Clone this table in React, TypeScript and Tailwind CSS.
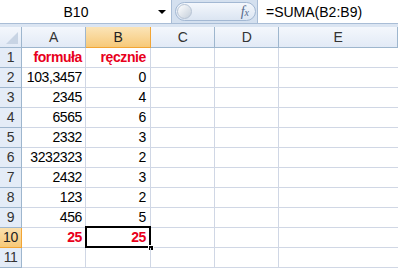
import React from "react";

const font = { fontFamily: '"Liberation Sans", Arial, sans-serif' };

const cols = ["A", "B", "C", "D", "E"];
const rows: [string, string, boolean][] = [
  ["formuła", "ręcznie", true],
  ["103,3457", "0", false],
  ["2345", "4", false],
  ["6565", "6", false],
  ["2332", "3", false],
  ["3232323", "2", false],
  ["2432", "3", false],
  ["123", "2", false],
  ["456", "5", false],
  ["25", "25", true],
  ["", "", false],
];

export default function App() {
  return (
    <div className="w-[398px] h-[268px] overflow-hidden bg-[#dbe5f2] flex flex-col" style={font}>
      {/* formula bar */}
      <div className="h-[24px] flex items-stretch bg-[#d4e0ef] border-b border-[#a9bdd6] shrink-0">
        <div className="w-[172px] bg-white border-r border-[#a9bdd6] flex items-center">
          <div className="w-[152px] text-center text-[14px] text-black leading-none">B10</div>
          <div className="flex-1 flex justify-center">
            <div className="w-0 h-0 border-l-[4px] border-r-[4px] border-t-[4px] border-l-transparent border-r-transparent border-t-black" />
          </div>
        </div>
        <div className="flex items-center pl-[3px] pr-[1px]">
          <div className="relative w-[81px] h-[19px] rounded-full border border-[#a3b8d3] bg-gradient-to-b from-[#f4f7fc] to-[#dbe5f2] flex items-center justify-end pr-[6px]">
            <div className="absolute left-[1px] top-[1px] w-[15px] h-[15px] rounded-full bg-gradient-to-br from-[#ffffff] to-[#c5cfdb] border border-[#b6c3d4]" />
            <span className="text-[14px] italic text-[#55698a] leading-none" style={{ fontFamily: '"Liberation Serif", serif' }}>
              f<span className="text-[10px]">x</span>
            </span>
          </div>
        </div>
        <div className="flex-1 bg-white border-l border-[#a9bdd6] flex items-center pl-[8px] text-[14px] text-black leading-none">
          =SUMA(B2:B9)
        </div>
      </div>
      <div className="h-[3px] shrink-0" />
      {/* sheet */}
      <div className="grid grid-cols-[22px_64px_65px_64px_64px_1fr] bg-white text-[14px] tracking-[-0.4px] flex-1">
        {/* header row */}
        <div className="h-[21px] bg-gradient-to-b from-[#f4f7fc] to-[#e2eaf6] border-r border-b border-[#9eb6ce] relative">
          <div className="absolute right-[3px] bottom-[3px] w-0 h-0" style={{ borderBottom: "12px solid #c8d4e4", borderLeft: "12px solid transparent" }} />
        </div>
        {cols.map((c) => (
          <div
            key={c}
            className={
              "h-[21px] flex items-center justify-center border-r border-b text-[14px] " +
              (c === "B"
                ? "bg-gradient-to-b from-[#fbe4b7] to-[#f7c978] border-[#f2a535] text-[#222]"
                : "bg-gradient-to-b from-[#f4f7fc] to-[#e2eaf6] border-[#9eb6ce] text-[#333]")
            }
          >
            {c}
          </div>
        ))}
        {rows.map((r, i) => {
          const n = i + 1;
          const sel = n === 10;
          const red = r[2];
          const txt = red ? "text-[#e8001c] font-bold" : "text-black";
          return (
            <React.Fragment key={n}>
              <div
                className={
                  "h-[20px] flex items-center justify-center border-r border-b text-[14px] " +
                  (sel
                    ? "bg-gradient-to-b from-[#fbe0ad] to-[#f7c978] border-[#f2a535] text-[#222]"
                    : "bg-[#e4ecf7] border-[#9eb6ce] text-[#333]")
                }
              >
                {n}
              </div>
              <div className={"h-[20px] flex items-center justify-end pr-[3px] border-r border-b border-[#d0d7e5] " + txt}>
                {r[0]}
              </div>
              <div className={"relative h-[20px] flex items-center justify-end pr-[4px] border-r border-b border-[#d0d7e5] " + txt}>
                {r[1]}
                {sel && (
                  <>
                    <div className="absolute left-[-1px] top-[-2px] right-[-1px] bottom-[-1px] border-2 border-black" />
                    <div className="absolute right-[-4px] bottom-[-4px] w-[6px] h-[6px] bg-black border border-white" />
                  </>
                )}
              </div>
              <div className="h-[20px] border-r border-b border-[#d0d7e5]" />
              <div className="h-[20px] border-r border-b border-[#d0d7e5]" />
              <div className="h-[20px] border-b border-[#d0d7e5]" />
            </React.Fragment>
          );
        })}
      </div>
    </div>
  );
}
